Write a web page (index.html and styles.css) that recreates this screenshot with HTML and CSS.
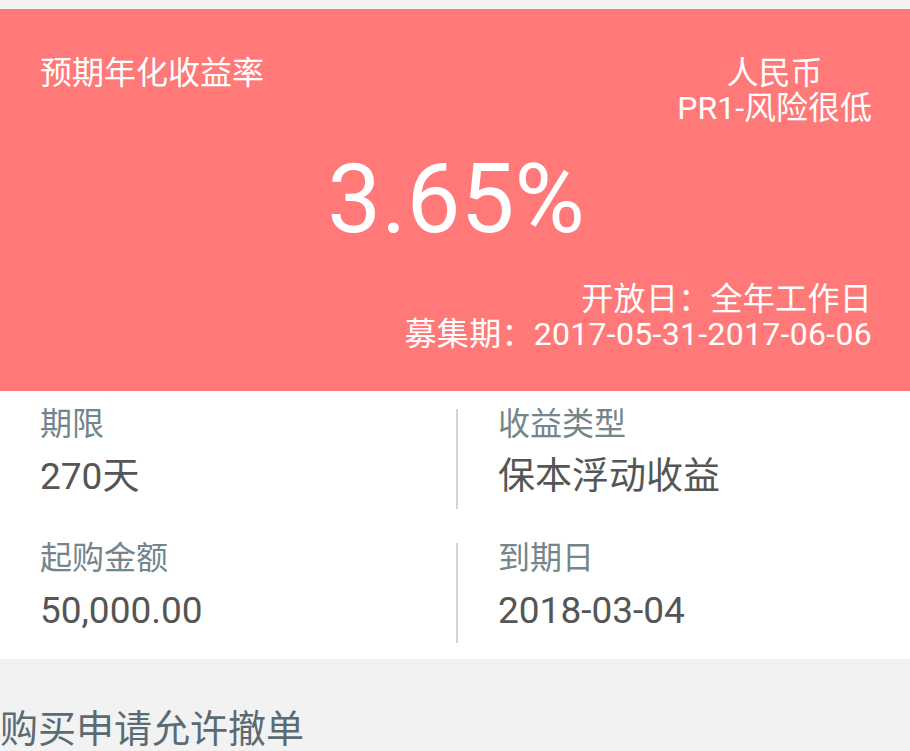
FILE: index.html
```html
<!DOCTYPE html>
<html lang="zh-CN">
<head>
  <meta charset="UTF-8">
  <meta name="viewport" content="width=device-width, initial-scale=1.0">
  <title>产品详情</title>
  <link rel="stylesheet" href="styles.css">
</head>
<body>
  <div class="page">
    <div class="hero">
      <div class="hero-top">
        <div class="hero-label">预期年化收益率</div>
        <div class="hero-tags">
          <div>人民币</div>
          <div>PR1-风险很低</div>
        </div>
      </div>
      <div class="hero-rate">3.65%</div>
      <div class="hero-dates">
        <div>开放日：全年工作日</div>
        <div>募集期：2017-05-31-2017-06-06</div>
      </div>
    </div>

    <div class="info">
      <div class="info-row">
        <div class="info-cell">
          <div class="info-label">期限</div>
          <div class="info-value">270天</div>
        </div>
        <div class="divider"></div>
        <div class="info-cell">
          <div class="info-label">收益类型</div>
          <div class="info-value">保本浮动收益</div>
        </div>
      </div>
      <div class="info-row">
        <div class="info-cell">
          <div class="info-label">起购金额</div>
          <div class="info-value">50,000.00</div>
        </div>
        <div class="divider"></div>
        <div class="info-cell">
          <div class="info-label">到期日</div>
          <div class="info-value">2018-03-04</div>
        </div>
      </div>
    </div>

    <div class="notice">购买申请允许撤单</div>
  </div>
</body>
</html>
```

FILE: styles.css
```css
body {
  margin: 0;
  background-color: #f2f2f2;
  font-family: Roboto, "Noto Sans CJK SC", sans-serif;
}

.page {
  padding-top: 9px;
}

.hero {
  background-color: #ff7979;
  color: #fff;
  padding: 47px 38px 39px 40px;
}

.hero-top {
  display: flex;
  justify-content: space-between;
  align-items: flex-start;
}

.hero-label {
  font-size: 32px;
  line-height: 34px;
}

.hero-tags {
  font-size: 32px;
  line-height: 35px;
  text-align: center;
}

.hero-rate {
  margin-top: 25px;
  font-size: 96px;
  line-height: 96px;
  text-align: center;
}

.hero-dates {
  margin-top: 35px;
  font-size: 32px;
  line-height: 35px;
  letter-spacing: 0.3px;
  text-align: right;
}

.info {
  background-color: #fff;
}

.info-row {
  display: flex;
  height: 134px;
}

.info-cell {
  flex: 1;
  padding: 16px 0 0 40px;
}

.info-row .info-cell:first-child {
  flex: none;
  width: 416px;
}

.divider {
  width: 2px;
  height: 100px;
  margin-top: 18px;
  background-color: #d4d4d4;
}

.info-label {
  font-size: 32px;
  line-height: 34px;
  color: #74858b;
}

.info-value {
  margin-top: 16px;
  font-size: 37px;
  line-height: 40px;
  color: #555;
}

.notice {
  margin-top: 48px;
  font-size: 38px;
  line-height: 44px;
  color: #5b6b73;
}
```
